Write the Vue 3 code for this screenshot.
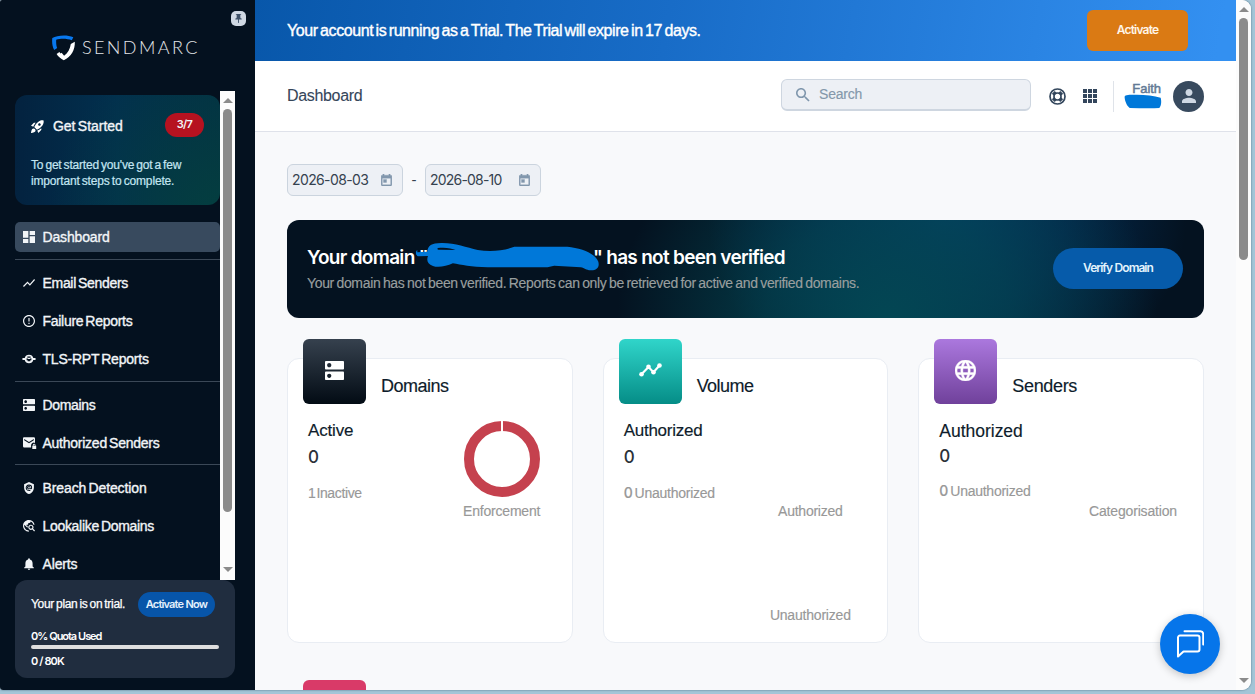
<script setup>
const DNS = 'M20 13H4c-.55 0-1 .45-1 1v6c0 .55.45 1 1 1h16c.55 0 1-.45 1-1v-6c0-.55-.45-1-1-1zM7 19c-1.1 0-2-.9-2-2s.9-2 2-2 2 .9 2 2-.9 2-2 2zM20 3H4c-.55 0-1 .45-1 1v6c0 .55.45 1 1 1h16c.55 0 1-.45 1-1V4c0-.55-.45-1-1-1zM7 9c-1.1 0-2-.9-2-2s.9-2 2-2 2 .9 2 2-.9 2-2 2z'

const groups = [
  [
    { label: 'Dashboard', track: -0.16, active: true, box: '3 3 18 18', path: 'M13 9V3h8v6ZM3 13V3h8v10Zm10 8V11h8v10ZM3 21v-6h8v6Z' },
  ],
  [
    { label: 'Email Senders', track: -0.31, box: '2 2 20 20', path: 'M3.5 18.49l6-6.01 4 4L22 6.92l-1.41-1.41-7.09 7.97-4-4L2 16.99z' },
    { label: 'Failure Reports', track: -0.29, box: '2 2 20 20', path: 'M11 15h2v2h-2zm0-8h2v6h-2zm.99-5C6.47 2 2 6.48 2 12s4.47 10 9.99 10C17.52 22 22 17.52 22 12S17.52 2 11.99 2zM12 20c-4.42 0-8-3.58-8-8s3.58-8 8-8 8 3.58 8 8-3.58 8-8 8z' },
    { label: 'TLS-RPT Reports', track: -0.22, box: '1 1 22 22', path: 'M0 10.200h4.200a8.100 8.100 0 0 1 15.600 0H24v3.600h-4.200a8.100 8.100 0 0 1-15.600 0H0zM9 7.300v2.200h6V7.300zM7.600 10.600v3.800h2v1.800h4.800v-1.800h2v-3.800h-2v1.600H9.600v-1.600z' },
  ],
  [
    { label: 'Domains', track: -0.34, box: '3 3 18 18', path: DNS },
    { label: 'Authorized Senders', track: -0.25, box: '2 3 20 19', path: 'M4 3h16a2 2 0 0 1 2 2v7.300a4.500 4.500 0 0 0-6.500 4V20H4a2 2 0 0 1-2-2V5c0-1.100.9-2 2-2zm0 3v2l8 5 8-5V6l-8 5zM22.800 17v-1a2.200 2.200 0 0 0-4.400 0v1H17.500v5.500H24V17zm-1.300 0h-1.800v-1a.9.9 0 0 1 1.800 0z' },
  ],
  [
    { label: 'Breach Detection', track: -0.11, box: '2 1 20 22', path: 'M12 1L3 5v6c0 5.550 3.840 10.740 9 12 5.160-1.260 9-6.450 9-12V5zm0 4.800a5.700 5.700 0 0 1 5.700 5.700c0 3-3.200 3.500-4 2a3 3 0 1 1 .8-2c0 1.300 1.500 1.300 1.500 0A4 4 0 1 0 14 15.200l1 1.500A5.900 5.900 0 1 1 12 5.800zm0 4.300a1.500 1.500 0 1 0 0 3 1.500 1.500 0 0 0 0-3z' },
    { label: 'Lookalike Domains', track: -0.31, box: '2 2 20.500 20.500', path: 'M19.300 16.900c.4-.7.7-1.500.7-2.400 0-2.500-2-4.500-4.500-4.500S11 12 11 14.500s2 4.500 4.500 4.500c.9 0 1.700-.3 2.400-.7l3.200 3.200 1.400-1.400zM15.500 17c-1.400 0-2.500-1.100-2.500-2.500s1.100-2.500 2.500-2.500 2.500 1.100 2.500 2.500-1.100 2.500-2.500 2.500zM12 20v2C6.480 22 2 17.520 2 12S6.480 2 12 2c4.840 0 8.870 3.440 9.800 8h-2.070c-.64-2.460-2.400-4.470-4.730-5.410V5c0 1.100-.9 2-2 2h-2v2c0 .55-.45 1-1 1H8v2h2v3H9l-4.790-4.790C4.080 10.790 4 11.380 4 12c0 4.410 3.590 8 8 8z' },
    { label: 'Alerts', track: -0.16, box: '2 2 20 20', path: 'M12 22c1.100 0 2-.9 2-2h-4c0 1.100.89 2 2 2zm6-6v-5c0-3.070-1.640-5.640-4.500-6.320V4c0-.83-.67-1.500-1.500-1.500s-1.500.67-1.500 1.500v.68C7.630 5.360 6 7.920 6 11v5l-2 2v1h16v-1l-2-2z' },
  ],
]
</script>

<template>
  <div class="desktop">
    <div class="window">
      <aside class="sidebar">
        <span class="pin">
          <svg viewBox="0 0 24 24"><path d="M16 9V4h1c.55 0 1-.45 1-1s-.45-1-1-1H7c-.55 0-1 .45-1 1s.45 1 1 1h1v5c0 1.660-1.340 3-3 3v2h5.970v7l1 1 1-1v-7H19v-2c-1.660 0-3-1.340-3-3z" /></svg>
        </span>
        <div class="brand">
          <svg class="shield" viewBox="0 0 24 26">
            <path d="M0.300 3C5 .2 15 -.6 21.300 2.200L19.800 5.300C15 3.400 8.500 3.300 4.200 4.800c-.2 3.200.1 6 1 8.200L2.200 15C.3 11.500-.2 7 .3 3z" fill="#0878ee" />
            <path d="M22.800 6.800c.4 8-3.500 15-11 18.400-3-1.300-5.500-3.500-7.200-6.200L7.400 17l1.200 1.500 1-.8 2.500 3c3.800-2.500 6-6.800 6.700-11.700z" fill="#fff" />
          </svg>
          <span class="wordmark">SENDMARC</span>
        </div>

        <div class="scroller">
          <div class="side-content">
            <section class="started">
              <div class="started-head">
                <svg viewBox="2 2 20 20"><path d="M9.190 6.350c-2.040 2.290-3.440 5.580-3.570 5.890L2 10.690l4.050-4.050c.47-.47 1.150-.68 1.810-.55l1.330.26zM11.170 17s3.740-1.550 5.890-3.700c5.400-5.400 4.500-9.620 4.210-10.570-.95-.3-5.170-1.190-10.570 4.210C8.550 9.090 7 12.830 7 12.830L11.170 17zm6.480-2.190c-2.290 2.040-5.580 3.440-5.890 3.570L13.310 22l4.050-4.050c.47-.47.68-1.150.55-1.810l-.26-1.330zM9 18c0 .83-.34 1.580-.88 2.120C6.940 21.300 2 22 2 22s.7-4.940 1.880-6.120C4.420 15.340 5.170 15 6 15c1.660 0 3 1.340 3 3zm4-9c0-1.100.9-2 2-2s2 .9 2 2-.9 2-2 2-2-.9-2-2z" /></svg>
                <span class="started-title">Get Started</span>
                <span class="count">3/7</span>
              </div>
              <p>To get started you've got a few<br /><span>important steps to complete.</span></p>
            </section>
            <nav>
              <div v-for="(group, g) in groups" :key="g" class="group">
                <a v-for="item in group" :key="item.label" class="item" :class="{ active: item.active }">
                  <svg :viewBox="item.box"><path fill-rule="evenodd" :d="item.path" /></svg>
                  <span :style="{ letterSpacing: item.track + 'px' }">{{ item.label }}</span>
                </a>
              </div>
            </nav>
          </div>
          <div class="bar side-bar"><i class="up"></i><b></b><i class="down"></i></div>
        </div>

        <section class="plan">
          <div class="plan-head"><span class="plan-text">Your plan is on trial.</span><button>Activate Now</button></div>
          <div class="quota">0% Quota Used</div>
          <div class="track"></div>
          <div class="usage">0 / 80K</div>
        </section>
      </aside>

      <div class="main">
        <div class="trial">
          <span>Your account is running as a Trial. The Trial will expire in 17 days.</span>
          <button>Activate</button>
        </div>
        <header class="topbar">
          <h1>Dashboard</h1>
          <div class="search">
            <svg viewBox="3 3 18 18"><path d="M15.500 14h-.79l-.28-.27C15.410 12.590 16 11.110 16 9.500 16 5.910 13.090 3 9.500 3S3 5.910 3 9.500 5.910 16 9.500 16c1.610 0 3.090-.59 4.230-1.570l.27.28v.79l5 4.990L20.490 19l-4.990-5zm-6 0C7.010 14 5 11.990 5 9.500S7.010 5 9.500 5 14 7.010 14 9.500 11.990 14 9.500 14z" /></svg>
            <span>Search</span>
          </div>
          <svg class="help" viewBox="0 0 17 17" fill="none" stroke="#33465c">
            <circle cx="8.500" cy="8.500" r="7.500" stroke-width="1.700" />
            <circle cx="8.500" cy="8.500" r="3.500" stroke-width="1.700" />
            <path d="M4.300 4.300l2 2M12.700 4.300l-2 2M4.300 12.700l2-2M12.700 12.700l-2-2" stroke-width="4" />
          </svg>
          <div class="apps"><i v-for="n in 9" :key="n"></i></div>
          <div class="user">
            <span class="name">Faith</span>
            <svg viewBox="1063 284 113 44"><path d="M1065 295C1063 286 1075 286 1090 286c30-1 60 2 82 9 3 10 2 25-4 30-30 3-60 0-88 0-8-5-14-19-15-30z" /></svg>
          </div>
          <span class="avatar"><svg viewBox="4 4 16 16"><path d="M12 12c2.210 0 4-1.790 4-4s-1.790-4-4-4-4 1.790-4 4 1.790 4 4 4zm0 2c-2.670 0-8 1.340-8 4v2h16v-2c0-2.660-5.330-4-8-4z" /></svg></span>
        </header>

        <div class="content">
          <div class="dates">
            <div class="date"><span>2026-08-03</span><svg viewBox="3 1 18 20"><path d="M19 3h-1V1h-2v2H8V1H6v2H5c-1.110 0-1.990.9-1.990 2L3 19c0 1.100.89 2 2 2h14c1.100 0 2-.9 2-2V5c0-1.100-.9-2-2-2zm0 16H5V8h14v11zM7 10h5v5H7z" /></svg></div>
            <span class="dash">-</span>
            <div class="date second"><span>2026-08-10</span><svg viewBox="3 1 18 20"><path d="M19 3h-1V1h-2v2H8V1H6v2H5c-1.110 0-1.990.9-1.990 2L3 19c0 1.100.89 2 2 2h14c1.100 0 2-.9 2-2V5c0-1.100-.9-2-2-2zm0 16H5V8h14v11zM7 10h5v5H7z" /></svg></div>
          </div>

          <section class="verify">
            <div>
              <h2>Your domain "<span class="redacted"><svg viewBox="404 94 554 90"><path fill-rule="evenodd" d="M408 125L438 123C440 105 450 97 480 97c40-1 75 13 110 21 40 6 80 2 110-10H860c40 4 82 18 93 45 5 20-8 27-23 26-15 0-18-7-30-9l-80-5-20 5H620c-50 0-80-8-105-12-20 9-45 14-60 8-16-6-20-16-15-30l-30 1c-8-4-8-15-2-19zm62-13c-4 4 0 6 8 5l45 1c-10-6-35-9-53-6z" /></svg></span>" has not been verified</h2>
              <p>Your domain has not been verified. Reports can only be retrieved for active and verified domains.</p>
            </div>
            <button>Verify Domain</button>
          </section>

          <div class="cards">
            <article class="card">
              <div class="card-head">
                <span class="tile navy"><svg class="dns" viewBox="3 3 18 18"><path :d="DNS" /></svg></span>
                <h3 class="t-domains">Domains</h3>
              </div>
              <div class="card-body">
                <div class="stats">
                  <div class="stat-label s1">Active</div><div class="stat-value">0</div><div class="stat-sub s1-sub">1 Inactive</div>
                </div>
                <div class="charts c1">
                  <svg class="donut" viewBox="0 0 76 76"><circle cx="38" cy="38" r="33" fill="none" stroke="#c5414e" stroke-width="10" /><path d="M38 0v11" stroke="#fff" stroke-width="2" /></svg>
                  <span class="l-enf">Enforcement</span>
                </div>
              </div>
            </article>
            <article class="card">
              <div class="card-head">
                <span class="tile teal"><svg class="line" viewBox="0 0 23 14"><path d="M2.500 11.300L9.500 4l5 5.200L20.500 2.500" fill="none" stroke="#fff" stroke-width="2.200" /><circle cx="2.500" cy="11.300" r="2.300" /><circle cx="9.500" cy="3.800" r="2.300" /><circle cx="14.500" cy="9.200" r="2.300" /><circle cx="20.500" cy="2.500" r="2.300" /></svg></span>
                <h3 class="t-volume">Volume</h3>
              </div>
              <div class="card-body">
                <div class="stats">
                  <div class="stat-label s2">Authorized</div><div class="stat-value">0</div><div class="stat-sub"><b>0</b> Unauthorized</div>
                </div>
                <div class="charts c2"><span class="l-auth">Authorized</span><span class="l-unauth">Unauthorized</span></div>
              </div>
            </article>
            <article class="card">
              <div class="card-head">
                <span class="tile purple"><svg class="globe" viewBox="2 2 20 20"><path d="M11.990 2C6.470 2 2 6.480 2 12s4.470 10 9.990 10C17.520 22 22 17.520 22 12S17.520 2 11.990 2zm6.930 6h-2.950c-.32-1.250-.78-2.450-1.380-3.560 1.840.63 3.370 1.910 4.330 3.560zM12 4.040c.83 1.200 1.480 2.530 1.910 3.960h-3.820c.43-1.430 1.080-2.760 1.910-3.960zM4.260 14C4.100 13.360 4 12.690 4 12s.1-1.360.26-2h3.380c-.08.66-.14 1.320-.14 2s.06 1.340.14 2H4.260zm.82 2h2.950c.32 1.250.78 2.450 1.380 3.560-1.840-.63-3.370-1.900-4.330-3.560zm2.950-8H5.080c.96-1.660 2.490-2.930 4.330-3.560C8.810 5.550 8.350 6.750 8.030 8zM12 19.960c-.83-1.200-1.480-2.530-1.910-3.960h3.820c-.43 1.430-1.080 2.760-1.910 3.960zM14.340 14H9.660c-.09-.66-.16-1.320-.16-2s.07-1.350.16-2h4.680c.09.65.16 1.320.16 2s-.07 1.340-.16 2zm.25 5.560c.6-1.110 1.060-2.310 1.380-3.560h2.950c-.96 1.650-2.490 2.930-4.330 3.560zM16.360 14c.08-.66.14-1.320.14-2s-.06-1.340-.14-2h3.380c.16.64.26 1.310.26 2s-.1 1.360-.26 2h-3.380z" /></svg></span>
                <h3 class="t-senders">Senders</h3>
              </div>
              <div class="card-body">
                <div class="stats third">
                  <div class="stat-label s3">Authorized</div><div class="stat-value">0</div><div class="stat-sub"><b>0</b> Unauthorized</div>
                </div>
                <div class="charts c3"><span class="l-cat">Categorisation</span></div>
              </div>
            </article>
          </div>
          <div class="next-row"><span class="tile pink"></span></div>
        </div>
      </div>

      <div class="bar page-bar"><i class="up"></i><b></b><i class="down"></i></div>
      <button class="chat">
        <svg viewBox="0 0 28 28"><path d="M2 26.500V7.500a2 2 0 0 1 2-2h17.500a2 2 0 0 1 2 2v12a2 2 0 0 1-2 2H7.500z" /><path d="M8.500 1.300h16a2.800 2.800 0 0 1 2.700 2.700v10.500" /></svg>
      </button>
    </div>
  </div>
</template>

<style>
html, body { margin: 0; overflow: hidden; }
</style>

<style scoped>
* { box-sizing: border-box; }
.desktop { width: 1255px; height: 694px; background: #a3c5d7; font-family: "Liberation Sans", Arial, sans-serif; overflow: hidden; }
.window { position: relative; display: flex; width: 1251px; height: 690px; border-radius: 2px 9px 9px 3px; overflow: hidden; background: #f8f9fb; box-shadow: 0 0 2px rgba(20, 50, 70, .65); }
h1, h2, h3, p { margin: 0; font-weight: 400; }
button { border: 0; padding: 0; font-family: Inter, "Liberation Sans", sans-serif; white-space: nowrap; }

/* Sidebar */
.sidebar { position: relative; width: 255px; flex: none; background: #04111f; color: #f2f5f8; display: flex; flex-direction: column; }
.pin { position: absolute; left: 231px; top: 11px; width: 15px; height: 15px; border-radius: 5px; background: #cfd8e3; display: flex; align-items: center; justify-content: center; }
.pin svg { width: 11px; height: 11px; fill: #3d5068; }
.brand { height: 91px; padding: 35px 0 0 52px; display: flex; align-items: flex-start; }
.shield { width: 24px; height: 26px; }
.wordmark { font: 300 18px/24px Lato, sans-serif; letter-spacing: 2.400px; margin-left: 6px; color: #e4e7ea; white-space: nowrap; }
.scroller { display: flex; height: 489px; overflow: hidden; flex: none; }
.side-content { width: 205px; margin-left: 15px; padding-top: 4px; }
.started { height: 110px; border-radius: 12px; padding: 18px 16px; background: radial-gradient(circle at 100% 110%, rgba(4, 66, 62, .8), rgba(4, 66, 62, 0) 72%), linear-gradient(90deg, #03223f, #02304e 50%, #033044); }
.started-head { display: flex; align-items: center; height: 24px; }
.started-head svg { width: 13px; height: 13px; fill: #fff; margin-top: 2px; }
.started-title { margin-left: 9px; margin-top: 2px; font-size: 14px; line-height: 26px; letter-spacing: -.03px; word-spacing: -1.500px; -webkit-text-stroke: .35px; }
.count { margin-left: auto; width: 39px; height: 24px; border-radius: 12px; background: #b61220; font: 600 11px/23px Inter, sans-serif; letter-spacing: -.7px; text-align: center; }
.started p { margin-top: 20px; font-size: 12px; line-height: 16px; letter-spacing: -.2px; word-spacing: -1px; color: #c4e6f2; -webkit-text-stroke: .2px; white-space: nowrap; }
.started p span { letter-spacing: -.16px; }
nav { padding-top: 17px; }
.group { display: flex; flex-direction: column; gap: 8px; padding-bottom: 7px; margin-bottom: 8px; border-bottom: 1px solid #3b4857; }
.group:nth-child(3) { padding-bottom: 6px; }
.item { display: flex; align-items: center; height: 30px; border-radius: 5px; padding-left: 8px; font-size: 14px; word-spacing: -1.500px; -webkit-text-stroke: .35px; white-space: nowrap; }
.item svg { width: 12px; height: 12px; margin-right: 7.500px; fill: #f2f5f8; overflow: visible; }
.active { background: #384a5e; }
.bar { background: #fcfcfc; display: flex; flex-direction: column; align-items: center; width: 15px; flex: none; }
.bar i { width: 0; height: 0; border: 5px solid transparent; border-top-width: 0; border-bottom: 5px solid #8b8b8b; }
.bar i.down { border-top: 5px solid #8b8b8b; border-bottom-width: 0; margin-top: auto; }
.bar b { width: 9px; border-radius: 5px; background: #8b8b8b; }
.side-bar { padding: 7px 0 8px; }
.side-bar b { height: 403px; margin-top: 6px; }
.plan { margin-left: 15px; width: 220px; height: 98px; border-radius: 12px; background: #202d3f; padding: 12px 16px; font-size: 12px; color: #fff; }
.plan-head { display: flex; align-items: center; height: 25px; }
.plan-text { letter-spacing: -.31px; word-spacing: -1px; -webkit-text-stroke: .25px; width: 107px; white-space: nowrap; line-height: 24px; margin-top: -1px; }
.plan button { width: 77px; height: 25px; border-radius: 13px; background: #0755a9; color: #e4f0fc; font-size: 11px; font-weight: 600; letter-spacing: -.83px; line-height: 22px; word-spacing: .5px; padding-bottom: 1px; }
.quota { margin-top: 13px; font: 600 11px/13px Inter, sans-serif; letter-spacing: -1.060px; white-space: nowrap; word-spacing: .3px; }
.track { margin-top: 2px; width: 188px; height: 4px; border-radius: 2px; background: #dededf; }
.usage { margin-top: 6px; font: 600 11px/13px Inter, sans-serif; letter-spacing: -.88px; }

/* Header */
.main { width: 981px; flex: none; height: 690px; overflow: hidden; }
.trial { height: 61px; padding: 0 48px 0 32px; display: flex; align-items: center; justify-content: space-between; color: #fff; background: linear-gradient(100deg, #0857aa, #186cc7 42%, #3390f1 98%); }
.trial span { font-size: 16px; letter-spacing: -.42px; word-spacing: -1.600px; -webkit-text-stroke: .4px; white-space: nowrap; }
.trial button { width: 101px; height: 41px; margin-bottom: 1px; padding-bottom: 2px; border-radius: 6px; background: #da7a14; color: #fff5e8; font-size: 12px; font-weight: 600; letter-spacing: -.8px; }
.topbar { height: 71px; padding: 0 32px; background: #fff; border-bottom: 1px solid #dfe2ea; display: flex; align-items: center; }
h1 { flex: 1; font-size: 16px; letter-spacing: -.33px; color: #35465a; -webkit-text-stroke: .1px; }
.search { width: 250px; height: 32px; margin-top: -2px; border: 1px solid #ced6e0; border-bottom-width: 2px; border-radius: 6px; background: #edf0f5; display: flex; align-items: center; padding-left: 14px; font-size: 14px; letter-spacing: -.21px; color: #8498ab; }
.search svg { width: 14px; height: 14px; margin-right: 9px; fill: #7f96ac; }
.search span { line-height: 28px; margin-top: -2px; -webkit-text-stroke: .15px; }
.help { width: 17px; height: 17px; margin-left: 18px; }
.apps { display: grid; grid-template-columns: repeat(3, 4px); gap: 1px; margin-left: 17px; }
.apps i { width: 4px; height: 4px; background: #33465c; }
.user { position: relative; height: 31px; width: 49px; margin-left: 16px; border-left: 1px solid #dfe3e9; text-align: right; }
.user .name { display: block; font-size: 13px; line-height: 16px; letter-spacing: -.04px; color: #627a95; -webkit-text-stroke: .5px; padding-right: 1px; }
.user svg { position: absolute; left: 10px; top: 13px; width: 38px; height: 15px; fill: #0078d9; }
.avatar { width: 31px; height: 31px; margin-left: 11px; border-radius: 50%; background: #384a5e; display: flex; align-items: center; justify-content: center; }
.avatar svg { width: 14px; height: 14px; fill: #cfd8e3; margin-top: -1px; }

/* Content */
.content { padding: 32px 32px 0; background: #f8f9fb; height: 558px; }
.dates { display: flex; align-items: center; }
.date { width: 116px; height: 32px; border: 1px solid #cbd4de; border-radius: 6px; background: #edf0f5; display: flex; align-items: center; padding-left: 4px; font: 14px Inter, sans-serif; letter-spacing: -.62px; color: #35424f; }
.date span { width: 90px; line-height: 28px; margin-top: -1px; }
.second span { letter-spacing: -.8px; }
.date svg { width: 11px; height: 12px; fill: #8297ad; margin-left: -1px; stroke: #8297ad; stroke-width: .6px; }
.dash { width: 22px; text-align: center; font-size: 15px; color: #35424f; margin-top: -2px; }
.verify { height: 98px; margin-top: 24px; border-radius: 12px; padding: 0 21px 0 20px; display: flex; align-items: center; justify-content: space-between; background: radial-gradient(ellipse 270px 230px at 600px 100%, rgba(3, 72, 84, .95), rgba(3, 72, 84, .65) 45%, rgba(3, 72, 84, 0)), radial-gradient(ellipse 240px 210px at 660px -10%, #033a66, rgba(3, 45, 85, .8) 50%, rgba(3, 40, 70, 0)), #041220; }
h2 { margin-top: 1px; font: 600 19px/24px Inter, sans-serif; letter-spacing: -.7px; color: #fff; white-space: nowrap; }
.redacted { position: relative; display: inline-block; width: 165px; height: 10px; }
.redacted svg { position: absolute; left: -12px; top: -12px; width: 184px; height: 30px; fill: #0078d9; overflow: visible; }
.verify p { margin-top: 5px; margin-bottom: 2px; font-size: 14px; line-height: 16px; letter-spacing: -.34px; word-spacing: -1px; color: #999f9f; white-space: nowrap; -webkit-text-stroke: .15px; }
.verify button { width: 130px; height: 41px; margin-top: -2px; padding-bottom: 2px; border-radius: 21px; background: #065baa; color: #e2f3fd; font-size: 12px; font-weight: 600; letter-spacing: -.98px; word-spacing: .5px; }
.cards { display: grid; grid-template-columns: repeat(3, 1fr); gap: 30px; margin-top: 40px; }
.card { height: 285px; border: 1px solid #e9edf3; border-radius: 12px; background: #fff; }
.card-head { display: flex; align-items: flex-start; height: 56px; padding-left: 15px; }
.tile { width: 63px; height: 65px; margin-top: -20px; border-radius: 6px; flex: none; display: flex; align-items: center; justify-content: center; padding-bottom: 3px; }
.tile svg { fill: #fff; }
.navy { background: linear-gradient(#36414e, #020b14); }
.teal { background: linear-gradient(#30d5ca, #058d87); }
.purple { background: linear-gradient(#ab78de, #70419b); }
.pink { background: #d93a68; display: block; }
.dns { width: 19px; height: 19px; }
.line { width: 23px; height: 14px; }
.globe { width: 21px; height: 21px; stroke: #fff; stroke-width: .4px; }
h3 { margin: 15px 0 0 15px; font-size: 18px; line-height: 24px; color: #0e1c2b; -webkit-text-stroke: .15px; }
.t-domains { letter-spacing: -.5px; }
.t-volume { letter-spacing: -.55px; }
.t-senders { letter-spacing: -.34px; }
.card-body { display: flex; justify-content: space-between; }
.stats { padding: 5px 0 0 20px; white-space: nowrap; }
.stat-label { font-size: 17px; line-height: 22px; color: #0e1c2b; -webkit-text-stroke: .15px; }
.s1 { letter-spacing: -.17px; }
.s2 { letter-spacing: -.26px; }
.s3 { font-size: 17.500px; letter-spacing: -.02px; }
.stat-value { margin-top: 4px; font: 500 17px/22px Inter, sans-serif; color: #2b3138; }
.stat-sub { margin-top: 17px; font-size: 14px; line-height: 16px; letter-spacing: -.25px; word-spacing: -1.500px; color: #989898; -webkit-text-stroke: .15px; }
.stat-sub b { font: 500 14px/16px Inter, sans-serif; }
.s1-sub { letter-spacing: -.37px; word-spacing: -2.500px; }
.third { padding-top: 5px; }
.third .stat-value { margin-top: 3px; }
.third .stat-sub { margin-top: 16px; }
.charts { width: 120px; display: flex; flex-direction: column; align-items: center; font-size: 14px; line-height: 16px; color: #989898; -webkit-text-stroke: .15px; }
.donut { width: 76px; height: 76px; display: block; margin: 6px 0 6px; }
.c1 { margin-right: 10px; }
.c2 { margin-right: 17px; padding-top: 88px; gap: 88px; }
.c3 { margin-right: 10px; padding-top: 88px; }
.l-enf { letter-spacing: -.2px; }
.l-auth { letter-spacing: -.24px; }
.l-unauth { letter-spacing: -.2px; }
.l-cat { letter-spacing: -.17px; }
.next-row { padding: 57px 0 0 16px; }

.page-bar { height: 690px; padding: 7px 0 7px; }
.page-bar b { height: 242px; margin-top: 6px; }
.chat { position: absolute; left: 1160px; top: 614px; width: 60px; height: 60px; border-radius: 50%; background: #0675ea; box-shadow: 0 2px 8px rgba(0, 0, 0, .22); display: flex; align-items: center; justify-content: center; }
.chat svg { width: 28px; height: 28px; fill: none; stroke: #fff; stroke-width: 2; stroke-linecap: round; stroke-linejoin: round; }
</style>
